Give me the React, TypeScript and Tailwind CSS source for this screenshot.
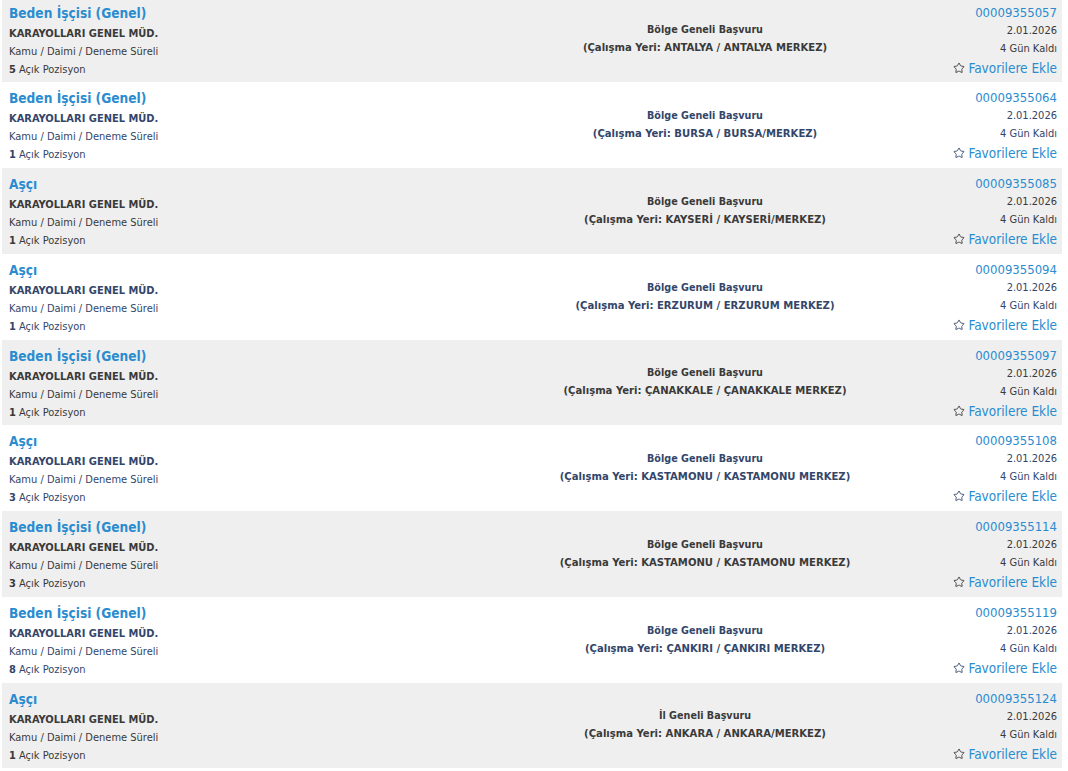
import React from "react";
import { Star } from "lucide-react";

type Job = {
  title: string;
  count: number;
  scope: string;
  place: string;
  no: string;
};

const jobs: Job[] = [
  { title: "Beden İşçisi (Genel)", count: 5, scope: "Bölge Geneli Başvuru", place: "ANTALYA / ANTALYA MERKEZ", no: "00009355057" },
  { title: "Beden İşçisi (Genel)", count: 1, scope: "Bölge Geneli Başvuru", place: "BURSA / BURSA/MERKEZ", no: "00009355064" },
  { title: "Aşçı", count: 1, scope: "Bölge Geneli Başvuru", place: "KAYSERİ / KAYSERİ/MERKEZ", no: "00009355085" },
  { title: "Aşçı", count: 1, scope: "Bölge Geneli Başvuru", place: "ERZURUM / ERZURUM MERKEZ", no: "00009355094" },
  { title: "Beden İşçisi (Genel)", count: 1, scope: "Bölge Geneli Başvuru", place: "ÇANAKKALE / ÇANAKKALE MERKEZ", no: "00009355097" },
  { title: "Aşçı", count: 3, scope: "Bölge Geneli Başvuru", place: "KASTAMONU / KASTAMONU MERKEZ", no: "00009355108" },
  { title: "Beden İşçisi (Genel)", count: 3, scope: "Bölge Geneli Başvuru", place: "KASTAMONU / KASTAMONU MERKEZ", no: "00009355114" },
  { title: "Beden İşçisi (Genel)", count: 8, scope: "Bölge Geneli Başvuru", place: "ÇANKIRI / ÇANKIRI MERKEZ", no: "00009355119" },
  { title: "Aşçı", count: 1, scope: "İl Geneli Başvuru", place: "ANKARA / ANKARA/MERKEZ", no: "00009355124" },
];

function Row({ job, gray }: { job: Job; gray: boolean }) {
  const text = gray ? "text-[#3a3a3a]" : "text-[#33466a]";
  return (
    <div className={`flex h-[85.75px] ${gray ? "bg-[#efefef]" : "bg-white"} ${text}`}>
      <div className="w-[458px] pl-[7px] pt-[6px]">
        <div className="text-[13.6px] font-bold leading-[20px] text-[#2a8ccf]">{job.title}</div>
        <div className="mt-[2px] text-[11px] font-bold leading-[18px]">KARAYOLLARI GENEL MÜD.</div>
        <div className="text-[11px] leading-[18px]">Kamu / Daimi / Deneme Süreli</div>
        <div className="text-[11px] leading-[18px]">
          <span className="font-bold">{job.count}</span> Açık Pozisyon
        </div>
      </div>
      <div className="flex w-[490px] flex-col items-center justify-center font-bold leading-[18px]">
        <div className="text-[10.7px]">{job.scope}</div>
        <div className="text-[11.2px]">(Çalışma Yeri: {job.place})</div>
      </div>
      <div className="flex flex-1 flex-col items-end pr-[5px] pt-[7px]">
        <div className="text-[13px] leading-[18px] text-[#2a8ccf]">{job.no}</div>
        <div className="text-[11px] leading-[18px]">2.01.2026</div>
        <div className="text-[11px] leading-[18px]">4 Gün Kaldı</div>
        <div className="flex items-center gap-[3px] text-[13.5px] leading-[20px] text-[#2a8ccf]">
          <Star size={12} strokeWidth={1.8} className={gray ? "text-[#3a3a3a]" : "text-[#33466a]"} />
          <span>Favorilere Ekle</span>
        </div>
      </div>
    </div>
  );
}

export default function App() {
  return (
    <div
      className="h-[771px] w-[1068px] overflow-hidden bg-white"
      style={{ fontFamily: '"DejaVu Sans Condensed", "Open Sans", sans-serif' }}
    >
      <div className="-mt-[3.5px] ml-[2px] w-[1060px]">
        {jobs.map((job, i) => (
          <Row key={job.no} job={job} gray={i % 2 === 0} />
        ))}
      </div>
    </div>
  );
}
